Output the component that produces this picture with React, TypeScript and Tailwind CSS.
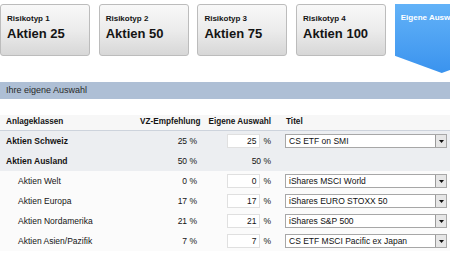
const profiles = [
  { label: 'Risikotyp 1', title: 'Aktien 25' },
  { label: 'Risikotyp 2', title: 'Aktien 50' },
  { label: 'Risikotyp 3', title: 'Aktien 75' },
  { label: 'Risikotyp 4', title: 'Aktien 100' },
];

interface Row {
  name: string;
  vz: string;
  own: string;
  fund?: string;
  parent?: boolean;
}

const rows: Row[] = [
  { name: 'Aktien Schweiz', vz: '25 %', own: '25', fund: 'CS ETF on SMI', parent: true },
  { name: 'Aktien Ausland', vz: '50 %', own: '50 %', parent: true },
  { name: 'Aktien Welt', vz: '0 %', own: '0', fund: 'iShares MSCI World' },
  { name: 'Aktien Europa', vz: '17 %', own: '17', fund: 'iShares EURO STOXX 50' },
  { name: 'Aktien Nordamerika', vz: '21 %', own: '21', fund: 'iShares S&P 500' },
  { name: 'Aktien Asien/Pazifik', vz: '7 %', own: '7', fund: 'CS ETF MSCI Pacific ex Japan' },
];

function FundSelect({ value }: { value: string }) {
  return (
    <div className="flex h-[14px] w-[162px] items-stretch border border-[#a7a7a7] bg-white">
      <div className="flex-1 truncate pl-[3px] text-[8.5px] leading-[12px] text-[#111]">{value}</div>
      <div className="flex w-[11px] items-center justify-center border-l border-[#9a9a9a] bg-[#e6e6e6]">
        <svg width="5" height="3" viewBox="0 0 5 3">
          <path d="M0 0h5L2.5 3z" fill="#111" />
        </svg>
      </div>
    </div>
  );
}

export default function App() {
  return (
    <div className="h-[253px] w-[450px] overflow-hidden bg-white font-['Liberation_Sans',Arial,sans-serif] text-[#141414]">
      {/* Profile tabs */}
      <div className="flex items-start gap-[8.7px] pt-[4px]">
        {profiles.map((p) => (
          <div
            key={p.label}
            className="h-[52px] w-[90px] shrink-0 rounded-[3px] border border-[#bcbcbc] bg-gradient-to-b from-[#f8f8f8] via-[#ececec] to-[#d7d7d7] px-[6px] pt-[9px]"
          >
            <div className="whitespace-nowrap text-[8px] font-bold leading-[9px]">{p.label}</div>
            <div className="mt-[3px] whitespace-nowrap text-[13px] font-bold leading-[15px]">{p.title}</div>
          </div>
        ))}
        <div className="h-[69px] w-[94px] shrink-0 bg-gradient-to-b from-[#62b2f8] to-[#3a93ee] px-[6px] pt-[9px] [clip-path:polygon(0_0,100%_0,100%_75%,50%_100%,0_75%)]">
          <div className="whitespace-nowrap text-[8px] font-bold leading-[9px] text-white">Eigene Auswahl</div>
        </div>
      </div>

      {/* Section header */}
      <div className="mt-[9px] flex h-[17px] items-center bg-[#aebfd5] pl-[6px] text-[9px] text-[#2a2a2a]">
        Ihre eigene Auswahl
      </div>

      {/* Allocation table */}
      <div className="mt-[16px]">
        <div className="flex h-[16px] items-center whitespace-nowrap border-b border-[#cdd3dc] bg-[#f7f7f7] text-[8.2px] font-bold">
          <div className="w-[140px] pl-[6px]">Anlageklassen</div>
          <div className="w-[57px] text-right">VZ-Empfehlung</div>
          <div className="w-[74px] text-right">Eigene Auswahl</div>
          <div className="pl-[15px]">Titel</div>
        </div>

        {rows.map((r) => (
          <div
            key={r.name}
            className={`flex h-[20px] items-center whitespace-nowrap text-[8.5px] ${r.parent ? 'bg-[#eceef1] font-bold' : 'bg-[#fbfbfb]'}`}
          >
            <div className={`w-[140px] ${r.parent ? 'pl-[6px]' : 'pl-[18px]'}`}>{r.name}</div>
            <div className={`w-[57px] text-right ${r.parent ? 'font-normal' : ''}`}>{r.vz}</div>
            <div className="flex w-[74px] items-center justify-end font-normal">
              {r.fund ? (
                <>
                  <div className="h-[14px] w-[33px] border border-[#e0e0e0] bg-white pr-[3px] text-right leading-[12px]">
                    {r.own}
                  </div>
                  <span className="ml-[3px]">%</span>
                </>
              ) : (
                <span>{r.own}</span>
              )}
            </div>
            <div className="pl-[14px] font-normal">{r.fund && <FundSelect value={r.fund} />}</div>
          </div>
        ))}
      </div>
    </div>
  );
}
